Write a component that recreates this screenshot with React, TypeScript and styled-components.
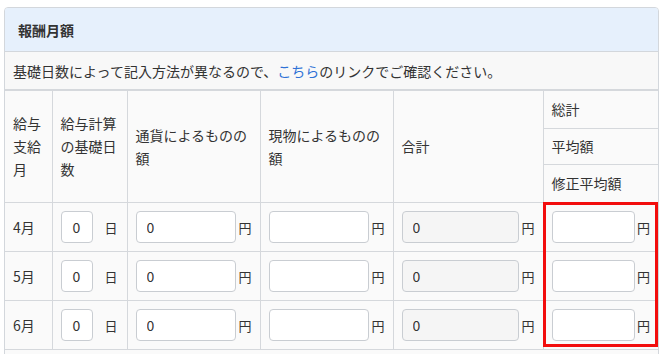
import React from "react";
import styled, { createGlobalStyle, css } from "styled-components";

const GlobalStyle = createGlobalStyle`
  html, body {
    margin: 0;
    padding: 0;
    overflow: hidden;
    background: #ffffff;
  }
  body {
    font-family: "Noto Sans CJK JP", "Noto Sans", sans-serif;
    color: #333333;
  }
`;

const Page = styled.div`
  padding: 7px 0 0 4px;
`;

const Card = styled.section`
  width: 655px;
  box-sizing: border-box;
  border: 1px solid #d3d7dc;
  border-radius: 4px;
  overflow: hidden;
  background: #fafafa;
`;

const CardHeader = styled.div`
  background: #e6f0fc;
  border-bottom: 1px solid #d3d7dc;
  height: 43px;
  display: flex;
  align-items: center;
  padding: 0 13px;
  h2 {
    margin: 0;
    font-size: 14px;
    font-weight: bold;
    color: #333;
  }
`;

const Note = styled.p`
  margin: 0;
  height: 37px;
  display: flex;
  align-items: center;
  padding: 0 8px;
  font-size: 14px;
  background: #f8f8f8;
  border-bottom: 1px solid #d5d8dc;
  a {
    color: #2f72d6;
    text-decoration: none;
  }
`;

const Table = styled.table`
  width: 100%;
  border-collapse: collapse;
  table-layout: fixed;
  font-size: 14px;
  line-height: 23px;
  background: #fafafa;
`;

type Edge = "top" | "mid" | "bottom";

const Cell = styled.td<{ $mark?: Edge }>`
  border: 1px solid #d5d8dc;
  padding: 0 8px;
  vertical-align: middle;
  text-align: left;
  font-weight: normal;
  &:first-child {
    border-left: none;
  }
  &:last-child {
    border-right: none;
  }
  ${(p) =>
    p.$mark &&
    css`
      position: relative;
      &::after {
        content: "";
        position: absolute;
        top: ${p.$mark === "top" ? -1 : -1}px;
        bottom: ${p.$mark === "bottom" ? 2 : -1}px;
        left: -1px;
        right: 0;
        border: 3px solid #f20d0d;
        border-top-width: ${p.$mark === "top" ? 3 : 0}px;
        border-bottom-width: ${p.$mark === "bottom" ? 3 : 0}px;
        pointer-events: none;
      }
    `}
`;

const HeadCell = styled(Cell).attrs({ as: "th" })``;

const SubHead = styled(HeadCell)<{ $h: number }>`
  height: ${(p) => p.$h}px;
`;

const BodyRow = styled.tr`
  height: 49px;
`;

const Field = styled.div<{ $gap?: number }>`
  display: flex;
  align-items: center;
  gap: ${(p) => p.$gap ?? 2}px;
`;

const Input = styled.input<{ $narrow?: boolean; $readOnly?: boolean }>`
  box-sizing: border-box;
  height: 32px;
  min-width: 0;
  flex: ${(p) => (p.$narrow ? "0 0 32px" : "1 1 auto")};
  width: ${(p) => (p.$narrow ? "32px" : "auto")};
  padding: 0 ${(p) => (p.$narrow ? 0 : 10)}px;
  text-align: ${(p) => (p.$narrow ? "center" : "left")};
  border: 1px solid #c9cdd2;
  border-radius: 4px;
  background: ${(p) => (p.$readOnly ? "#f5f5f5" : "#ffffff")};
  font-family: "Noto Sans CJK JP", "Noto Sans", sans-serif;
  font-size: 14px;
  color: #333;
  outline: none;
`;

const Unit = styled.span`
  flex: 0 0 auto;
  font-size: 13px;
  color: #333;
`;

const FooterCell = styled.td`
  height: 40px;
  border-top: 1px solid #d5d8dc;
`;

const months = ["4月", "5月", "6月"];
const marks: Edge[] = ["top", "mid", "bottom"];

export default function App() {
  return (
    <Page>
      <GlobalStyle />
      <Card>
        <CardHeader>
          <h2>報酬月額</h2>
        </CardHeader>
        <Note>
          基礎日数によって記入方法が異なるので、<a href="#">こちら</a>
          のリンクでご確認ください。
        </Note>
        <Table>
          <colgroup>
            <col style={{ width: 47 }} />
            <col style={{ width: 75 }} />
            <col style={{ width: 133 }} />
            <col style={{ width: 133 }} />
            <col style={{ width: 150 }} />
            <col />
          </colgroup>
          <thead>
            <tr>
              <HeadCell rowSpan={3}>給与支給月</HeadCell>
              <HeadCell rowSpan={3}>給与計算の基礎日数</HeadCell>
              <HeadCell rowSpan={3}>通貨によるものの額</HeadCell>
              <HeadCell rowSpan={3}>現物によるものの額</HeadCell>
              <HeadCell rowSpan={3}>合計</HeadCell>
              <SubHead $h={37}>総計</SubHead>
            </tr>
            <tr>
              <SubHead $h={35}>平均額</SubHead>
            </tr>
            <tr>
              <SubHead $h={37}>修正平均額</SubHead>
            </tr>
          </thead>
          <tbody>
            {months.map((m, i) => (
              <BodyRow key={m}>
                <Cell>{m}</Cell>
                <Cell>
                  <Field $gap={12}>
                    <Input $narrow defaultValue="0" />
                    <Unit>日</Unit>
                  </Field>
                </Cell>
                <Cell>
                  <Field>
                    <Input defaultValue="0" />
                    <Unit>円</Unit>
                  </Field>
                </Cell>
                <Cell>
                  <Field>
                    <Input defaultValue="" />
                    <Unit>円</Unit>
                  </Field>
                </Cell>
                <Cell>
                  <Field>
                    <Input $readOnly readOnly defaultValue="0" />
                    <Unit>円</Unit>
                  </Field>
                </Cell>
                <Cell $mark={marks[i]}>
                  <Field>
                    <Input defaultValue="" />
                    <Unit>円</Unit>
                  </Field>
                </Cell>
              </BodyRow>
            ))}
            <tr>
              <FooterCell colSpan={6} />
            </tr>
          </tbody>
        </Table>
      </Card>
    </Page>
  );
}
